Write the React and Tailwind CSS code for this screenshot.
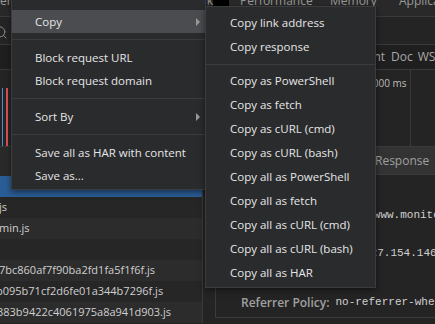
import { Search } from 'lucide-react';

const subItems = [
    ['Copy link address', 'Copy response'],
    [
        'Copy as PowerShell',
        'Copy as fetch',
        'Copy as cURL (cmd)',
        'Copy as cURL (bash)',
        'Copy all as PowerShell',
        'Copy all as fetch',
        'Copy all as cURL (cmd)',
        'Copy all as cURL (bash)',
        'Copy all as HAR',
    ],
];

const rows = [
    { name: 'js', ml: '-ml-[1px]' },
    { name: 'min.js', ml: '-ml-[1px]' },
    { name: '', ml: '' },
    { name: '7bc860af7f90ba2fd1fa5f1f6f.js', ml: '-ml-[1px]' },
    { name: 'b095b71cf2d6fe01a344b7296f.js', ml: '-ml-[4px]' },
    { name: '383b9422c4061975a8a941d903.js', ml: '-ml-[3px]' },
];

function Arrow() {
    return <span className="w-0 h-0 border-y-[4px] border-y-transparent border-l-[4px] border-l-[#9a9a9a]" />;
}

function Sep({ h }) {
    return (
        <div className={`${h} flex items-center`}>
            <div className="h-px w-full bg-[#3c3c3e]" />
        </div>
    );
}

export default function App() {
    return (
        <div className="relative w-[435px] h-[324px] overflow-hidden bg-[#242424] font-['Open_Sans',sans-serif] text-[#cfcfcf]">
            {/* Tab strip */}
            <div className="h-[17px] flex items-start bg-[#292929] border-b border-[#3a3a3a] text-[12px] text-[#9a9a9a] leading-none overflow-hidden whitespace-nowrap">
                <span className="shrink-0 -mt-[5px] w-[11px]">ent</span>
                <span className="shrink-0 -mt-[5px] w-[202px] text-right">Network</span>
                <span className="shrink-0 h-[7px] w-[16px] bg-black" />
                <span className="shrink-0 -mt-[5px] ml-[11px] w-[90px]">Performance</span>
                <span className="shrink-0 -mt-[5px] w-[69px]">Memory</span>
                <span className="shrink-0 -mt-[5px]">Application</span>
            </div>

            {/* Toolbar */}
            <div className="h-[28px] flex items-center border-b border-[#3a3a3a]">
                <Search className="-ml-[7px] mt-[3px]" size={15} strokeWidth={1.6} color="#8a8a8a" />
            </div>

            {/* Filter row */}
            <div className="h-[25px] flex items-center border-b border-[#3a3a3a] bg-[#1f1f1f] text-[12px] text-[#a8a8a8] whitespace-nowrap">
                <span className="ml-[360px]">Font</span>
                <span className="ml-[6px]">Doc</span>
                <span className="ml-[5px]">WS</span>
            </div>

            {/* Overview */}
            <div className="h-[76px] flex">
                <div className="w-[410px]">
                    <div className="flex gap-[3px] pl-[2px] pt-[18px] h-full">
                        <div className="w-px h-[58px] bg-[#4a90d9]" />
                        <div className="w-[2px] h-[58px] bg-[#e05050]" />
                    </div>
                </div>
                <div className="border-l border-[#3a3a3a] flex-1" />
            </div>
            <div className="absolute left-[367px] top-[76px] text-[10px] text-[#bdbdbd]">6000 ms</div>

            {/* Split: request list + details */}
            <div className="flex border-t border-[#3a3a3a]">
                <div className="w-[203px] border-r border-[#3a3a3a] text-[11px] whitespace-nowrap overflow-hidden">
                    <div className="h-[29px] bg-[#2a2a2a]" />
                    <div className="h-[21px] bg-[#2a5d95]" />
                    {rows.map((r, i) => (
                        <div
                            key={i}
                            className={`h-[21px] flex items-center ${i % 2 === 0 ? 'bg-[#262626]' : 'bg-[#2c2c2c]'}`}
                        >
                            <span className={r.ml}>{r.name}</span>
                        </div>
                    ))}
                </div>

                <div className="flex-1 whitespace-nowrap overflow-hidden">
                    <div className="h-[28px] flex items-center bg-[#333333] border-b border-[#3a3a3a] text-[12px] text-[#a0a0a0]">
                        <span className="ml-[172px]">Response</span>
                        <span className="ml-[24px]">Timing</span>
                    </div>
                    <div className="font-['Liberation_Mono',monospace] text-[11px] text-[#d0d0d0]">
                        <div className="h-[30px]" />
                        <div className="h-[20px] flex items-center">
                            <span className="ml-[118px]">https://www.monitor.com/</span>
                        </div>
                        <div className="h-[18px]" />
                        <div className="h-[20px] flex items-center">
                            <span className="ml-[161px]">127.154.146.8:443</span>
                        </div>
                        <div className="h-[21px]" />
                        <div className="flex border-l border-b border-[#3a3a3a] ml-[12px] h-[34px] pt-[4px]">
                            <div className="flex items-center">
                                <span className="ml-[25px] font-['Open_Sans',sans-serif] text-[12px] font-semibold text-[#a0a0a0]">
                                    Referrer Policy:
                                </span>
                                <span className="ml-[6px]">no-referrer-when-downgrade</span>
                            </div>
                        </div>
                    </div>
                </div>
            </div>

            {/* Context menu */}
            <div className="absolute left-[11px] top-[-1px] w-[195px] bg-[#2a2b2d] border border-[#3c3c3e] pt-[10px] pb-[2px] text-[11.5px] text-[#e6e6e6] shadow-[0_2px_6px_rgba(0,0,0,0.5)]">
                <div className="h-[23px] flex items-center justify-between pl-[23px] pr-[5px] bg-[#4b4c4f]">
                    <span>Copy</span>
                    <Arrow />
                </div>
                <Sep h="h-[13px]" />
                <div className="h-[23px] flex items-center pl-[23px]">Block request URL</div>
                <div className="h-[23px] flex items-center pl-[23px]">Block request domain</div>
                <Sep h="h-[13px]" />
                <div className="h-[23px] flex items-center justify-between pl-[23px] pr-[5px]">
                    <span>Sort By</span>
                    <Arrow />
                </div>
                <Sep h="h-[13px]" />
                <div className="h-[23px] flex items-center pl-[23px]">Save all as HAR with content</div>
                <div className="h-[23px] flex items-center pl-[23px]">Save as...</div>
            </div>

            {/* Copy submenu */}
            <div className="absolute left-[205px] top-[6px] w-[171px] bg-[#2a2b2d] border border-[#3c3c3e] pt-[4px] pb-[2px] text-[11.5px] text-[#e6e6e6] shadow-[0_2px_6px_rgba(0,0,0,0.5)]">
                {subItems[0].map((t) => (
                    <div key={t} className="h-[24px] flex items-center pl-[24px]">{t}</div>
                ))}
                <Sep h="h-[10px]" />
                {subItems[1].map((t) => (
                    <div key={t} className="h-[24px] flex items-center pl-[24px]">{t}</div>
                ))}
            </div>
        </div>
    );
}
